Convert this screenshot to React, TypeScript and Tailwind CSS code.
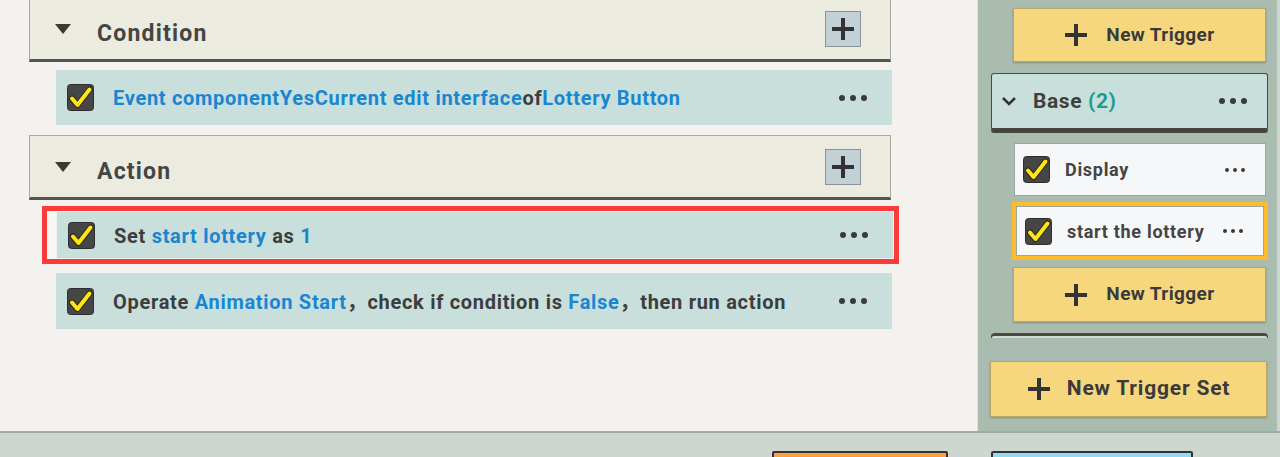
import React from 'react';

const Check: React.FC = () => (
  <svg width="27" height="27" viewBox="0 0 27 27" className="shrink-0">
    <rect x="0.5" y="0.5" width="26" height="26" rx="3" fill="#464646" stroke="#2e2e2e" />
    <path d="M5 14.5 L10.5 21 L22.5 5.5" fill="none" stroke="#2a2a10" strokeWidth="6" strokeLinecap="round" strokeLinejoin="round" />
    <path d="M5 14.5 L10.5 21 L22.5 5.5" fill="none" stroke="#ffe41a" strokeWidth="4" strokeLinecap="round" strokeLinejoin="round" />
  </svg>
);

const Dots: React.FC<{ small?: boolean }> = ({ small }) => (
  <div className={`flex items-center ${small ? 'gap-[4px]' : 'gap-[5px]'}`}>
    {[0, 1, 2].map(i => (
      <span key={i} className={`${small ? 'w-[4px] h-[4px]' : 'w-[6px] h-[6px]'} rounded-full bg-[#3a3a3a]`} />
    ))}
  </div>
);

const Plus: React.FC<{ size?: number }> = ({ size = 24 }) => (
  <svg width={size} height={size} viewBox="0 0 24 24" className="shrink-0">
    <path d="M12 1 V23 M1 12 H23" stroke="#333" strokeWidth="4" />
  </svg>
);

const SectionHeader: React.FC<{ title: string; className?: string }> = ({ title, className = '' }) => (
  <div
    className={`ml-[29px] w-[862px] h-[65px] shrink-0 flex items-center bg-[#ecebdf] border border-[#a9a89c] border-b-[3px] border-b-[#55554f] ${className}`}
  >
    <svg width="16" height="10" viewBox="0 0 16 10" className="ml-[25px]">
      <path d="M0 0 H16 L8 10 Z" fill="#3b3a30" />
    </svg>
    <span className="ml-[26px] pt-[11px] text-[23px] font-bold text-[#454545] tracking-[1.2px]">{title}</span>
    <div className="ml-auto mr-[29px] w-[36px] h-[36px] flex items-center justify-center bg-[#c3d0d5] border border-[#8a9397]">
      <Plus size={24} />
    </div>
  </div>
);

const Row: React.FC<{ children: React.ReactNode; className?: string }> = ({ children, className = '' }) => (
  <div className={`flex items-center bg-[#c8dfdc] pl-[11px] pr-[25px] ${className}`}>
    <Check />
    <div className="ml-[19px] pt-[1px] text-[20px] font-bold text-[#3d3d3d] tracking-[0.7px] whitespace-nowrap">{children}</div>
    <div className="ml-auto">
      <Dots />
    </div>
  </div>
);

const B: React.FC<{ children: React.ReactNode }> = ({ children }) => (
  <span className="text-[#1a86d0]">{children}</span>
);

const YellowButton: React.FC<{ label: string; className?: string; big?: boolean }> = ({ label, className = '', big }) => (
  <div
    className={`shrink-0 flex items-center justify-center bg-[#f7d77e] border border-[#b8a56e] shadow-[0_1px_2px_rgba(60,60,40,0.35)] ${big ? 'gap-[16px]' : 'gap-[18px]'} ${className}`}
  >
    <Plus size={24} />
    <span className={`font-bold text-[#3a3a3a] ${big ? 'text-[21px] tracking-[0.8px]' : 'text-[19px] tracking-[0.4px]'}`}>{label}</span>
  </div>
);

const TriggerItem: React.FC<{ label: string }> = ({ label }) => (
  <div className="h-full flex items-center bg-[#f6f7f9] border border-[#9aa6a0] pl-[8px] pr-[20px]">
    <Check />
    <span className="ml-[15px] text-[18px] font-bold text-[#444] tracking-[0.7px] whitespace-nowrap">{label}</span>
    <div className="ml-auto">
      <Dots small />
    </div>
  </div>
);

export default function App() {
  return (
    <div className="w-[1280px] h-[457px] overflow-hidden flex flex-col bg-[#cdd7cf] font-['Roboto','Noto_Sans_CJK_SC',sans-serif]">
      <div className="h-[431px] flex shrink-0">
        {/* main editor */}
        <div className="w-[978px] shrink-0 flex flex-col bg-[#f3f2ef] border-r border-[#e2e2dc] overflow-hidden">
          <SectionHeader title="Condition" className="-mt-[3px]" />
          <Row className="mt-[8px] ml-[56px] w-[836px] h-[55px] shrink-0">
            <B>Event componentYesCurrent edit interface</B>of<B>Lottery Button</B>
          </Row>
          <SectionHeader title="Action" className="mt-[10px]" />
          <div className="mt-[6px] ml-[42px] w-[857px] h-[58px] shrink-0 border-[5px] border-[#fb3a3a] bg-[#f7f6f3] pl-[9px]">
            <Row className="h-full border border-[#eef3f2]">
              Set <B>start lottery</B> as <B>1</B>
            </Row>
          </div>
          <Row className="mt-[9px] ml-[56px] w-[836px] h-[56px] shrink-0">
            Operate <B>Animation Start</B>，check if condition is <B>False</B>，then run action
          </Row>
        </div>

        {/* trigger sidebar */}
        <div className="w-[299px] shrink-0 bg-[#aabcaf] flex flex-col">
          <div className="h-[338px] shrink-0 overflow-hidden pt-[8px] flex flex-col">
            <YellowButton label="New Trigger" className="ml-[35px] w-[253px] h-[54px]" />
            <div className="mt-[11px] ml-[13px] w-[277px] h-[60px] shrink-0 flex items-center bg-[#c8dfdc] border border-[#4a4a42] border-b-[5px] border-b-[#46463e] rounded-[3px] pl-[9px] pr-[20px]">
              <svg width="16" height="10" viewBox="0 0 16 10">
                <path d="M2 2 L8 8 L14 2" fill="none" stroke="#333" strokeWidth="2.5" />
              </svg>
              <span className="ml-[16px] pt-[2px] text-[21px] font-bold text-[#3f3f3f] tracking-[0.6px]">
                Base <span className="text-[#1a9e8c]">(2)</span>
              </span>
              <div className="ml-auto">
                <Dots />
              </div>
            </div>
            <div className="mt-[10px] ml-[36px] w-[252px] h-[53px] shrink-0">
              <TriggerItem label="Display" />
            </div>
            <div className="mt-[6px] ml-[34px] w-[256px] h-[58px] shrink-0 border-[4px] border-[#fdbc2c]">
              <TriggerItem label="start the lottery" />
            </div>
            <YellowButton label="New Trigger" className="mt-[7px] ml-[35px] w-[253px] h-[55px]" />
            <div className="mt-[11px] ml-[13px] w-[277px] h-[40px] shrink-0 bg-[#c8dfdc] border-t-[3px] border-x border-[#4a4a42] rounded-t-[4px]" />
          </div>
          <YellowButton big label="New Trigger Set" className="mt-[23px] ml-[12px] w-[277px] h-[56px]" />
        </div>
        <div className="flex-1" />
      </div>

      {/* bottom bar */}
      <div className="flex-1 border-t-[2px] border-[#a2aca3] relative">
        <div className="absolute left-[772px] top-[18px] w-[176px] h-[20px] bg-[#ffa03e] border-[2px] border-[#333] rounded-t-[2px]" />
        <div className="absolute left-[991px] top-[18px] w-[202px] h-[20px] bg-[#8fdcf2] border-[2px] border-[#333] rounded-t-[2px]" />
      </div>
    </div>
  );
}
